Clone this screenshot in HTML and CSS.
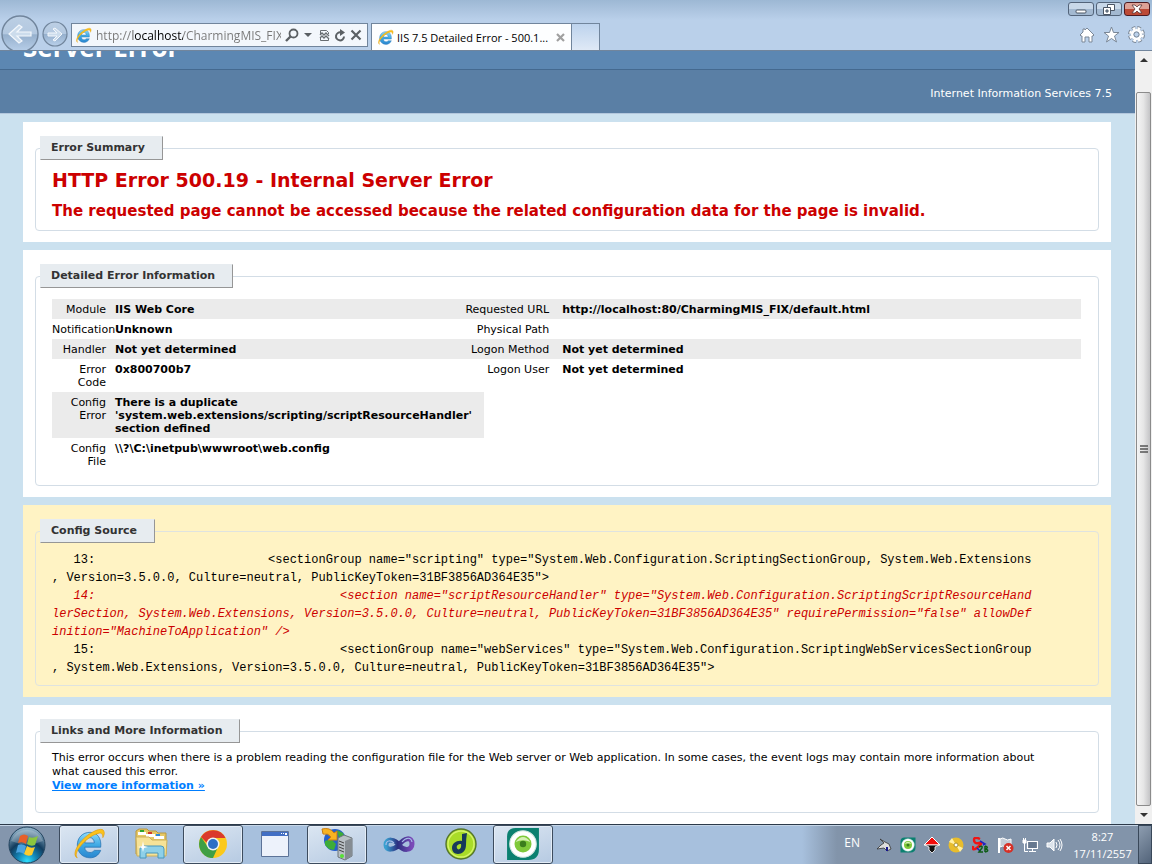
FILE: index.html
```html
<!DOCTYPE html>
<html lang="en">

<head>
    <meta charset="utf-8">
    <title>IIS 7.5 Detailed Error - 500.19 - Internal Server Error</title>
    <link rel="stylesheet" href="styles.css">
</head>

<body>
    <svg class="defs" aria-hidden="true">
        <defs>
            <linearGradient id="ieBlue" x1="0" y1="0" x2="0" y2="1">
                <stop offset="0" stop-color="#8fdcfa" />
                <stop offset="0.5" stop-color="#3fa9e4" />
                <stop offset="1" stop-color="#2a86cf" />
            </linearGradient>
            <linearGradient id="navFill" x1="0" y1="0" x2="0" y2="1">
                <stop offset="0" stop-color="#bccfe4" />
                <stop offset="0.5" stop-color="#b3c8e0" />
                <stop offset="0.52" stop-color="#96b0cd" />
                <stop offset="1" stop-color="#b9d0ea" />
            </linearGradient>
            <radialGradient id="orb" cx="0.5" cy="0.95" r="0.9">
                <stop offset="0" stop-color="#2fe0ff" />
                <stop offset="0.3" stop-color="#1484b5" />
                <stop offset="0.6" stop-color="#123c5e" />
                <stop offset="1" stop-color="#8fb0c6" />
            </radialGradient>
            <linearGradient id="vs" x1="0" y1="0" x2="1" y2="0">
                <stop offset="0" stop-color="#3aa0d0" />
                <stop offset="0.45" stop-color="#2b2f80" />
                <stop offset="1" stop-color="#7a4ab8" />
            </linearGradient>
            <symbol id="ie" viewBox="0 0 32 32">
                <path d="M27 19H12c0 3 2 5 5 5 2 0 3-1 4-2h6c-2 5-6 7-10 7-7 0-12-5-12-12S10 5 17 5s11 6 10 14zM12 15h9c0-3-2-5-4-5-3 0-5 2-5 5z" fill="url(#ieBlue)" stroke="#2470b0" stroke-width="0.7" fill-rule="evenodd" />
                <path d="M5 29C0 27 4 17 12 10 20 3 29 0 30 4c1 2 0 4-1 6 0-3-1-5-4-4C19 7 12 13 8 18c-4 5-5 9-3 11z" fill="#fbc21c" stroke="#dd9a12" stroke-width="0.6" />
            </symbol>
            <symbol id="eye" viewBox="0 0 32 32">
                <path d="M9 1h22v20q0 10-10 10H1V9q0-8 8-8z" fill="#0b8070" />
                <circle cx="16" cy="16" r="12.500" fill="#fff" stroke="#cfe4dd" />
                <circle cx="16" cy="16" r="8" fill="#7fc93a" />
                <circle cx="16" cy="16" r="3" fill="#3b7d1c" />
                <path d="M9 14q7-9 14 0-7-3-14 0z" fill="#d6f0b5" />
            </symbol>
        </defs>
    </svg>

    <header class="chrome">
        <nav class="nav">
            <button class="back" aria-label="Back">
                <svg width="38" height="38" viewBox="0 0 38 38">
                    <circle cx="19" cy="19" r="18" fill="url(#navFill)" stroke="#71859c" stroke-width="1.4" />
                    <path d="M8 19l10-9 3 2-5 5h14v4H16l5 5-3 2z" fill="#ccdcec" stroke="#f4f8fc" stroke-width="1.2" />
                </svg>
            </button>
            <button class="forward" aria-label="Forward">
                <svg width="26" height="26" viewBox="0 0 26 26">
                    <circle cx="13" cy="13" r="12" fill="url(#navFill)" stroke="#71859c" stroke-width="1.2" />
                    <path d="M20 13l-7-6-2 1 4 4H6v3h9l-4 4 2 1z" fill="#ccdcec" stroke="#f4f8fc" />
                </svg>
            </button>
        </nav>
        <div class="address">
            <svg width="17" height="17"><use href="#ie" /></svg>
            <input class="url" type="text" aria-label="Address" value="http://localhost/CharmingMIS_FIX/">
            <button aria-label="Search">
                <svg width="14" height="14" viewBox="0 0 14 14" fill="none" stroke="#5b6064">
                    <circle cx="8.500" cy="5.500" r="4" stroke-width="1.8" />
                    <path d="M5.500 8.500L1 13" stroke-width="2.400" />
                </svg>
            </button>
            <button class="caret" aria-label="Show address list">
                <svg width="8" height="5" viewBox="0 0 8 5"><path d="M0 0h8L4 4z" fill="#5b6064" /></svg>
            </button>
            <button aria-label="Compatibility view">
                <svg width="11" height="13" viewBox="0 0 11 13" fill="none" stroke="#686d71">
                    <path d="M1.500 5V1.500h6l2 2V5M1.500 9v2.500h8V9" />
                    <path d="M1 6l2-2 2 2 2-2 3 3M1 9l2-2 2 2 2-2 3 3" stroke-width="1.300" />
                </svg>
            </button>
            <button aria-label="Refresh">
                <svg width="12" height="13" viewBox="0 0 12 13">
                    <path d="M7 3.500a4 4 0 1 0 3 4" fill="none" stroke="#5b6064" stroke-width="2" />
                    <path d="M6 0l5 3.500L6 7z" fill="#5b6064" />
                </svg>
            </button>
            <button aria-label="Stop">
                <svg width="12" height="12" viewBox="0 0 12 12"><path d="M1.500 1.500l9 9M10.500 1.500l-9 9" stroke="#5b6064" stroke-width="2.200" /></svg>
            </button>
        </div>
        <div class="tab">
            <svg width="17" height="17"><use href="#ie" /></svg>
            <span class="tab-title">IIS 7.5 Detailed Error - 500.1...</span>
            <button aria-label="Close tab">
                <svg width="9" height="9" viewBox="0 0 9 9"><path d="M1 1l7 7M8 1L1 8" stroke="#a0a0a0" stroke-width="2.200" /></svg>
            </button>
        </div>
        <button class="new-tab" aria-label="New tab"></button>
        <div class="corner">
            <div class="window-buttons">
                <button aria-label="Minimize">
                    <svg width="12" height="11" viewBox="0 0 12 11"><rect x="1" y="6" width="10" height="3" rx="1" fill="#fff" stroke="#4b5665" /></svg>
                </button>
                <button aria-label="Restore">
                    <svg width="12" height="11" viewBox="0 0 12 11" fill="#fff" stroke="#4b5665">
                        <path d="M4.500 .5h7v6h-7z" />
                        <path d="M.5 3.500h7v7h-7z" />
                        <path d="M3 6h2v2H3z" fill="#9fb3c9" />
                    </svg>
                </button>
                <button class="close" aria-label="Close">
                    <svg width="12" height="10" viewBox="0 0 12 10"><path d="M1 1h3l2 2 2-2h3L8 5l3 4H8L6 7 4 9H1l3-4z" fill="#fff" stroke="#5a3636" stroke-width=".8" /></svg>
                </button>
            </div>
            <div class="tools">
                <button aria-label="Home">
                    <svg width="16" height="16" viewBox="0 0 16 16"><path d="M8 1l7 7-1 1h-1v6h-3v-5H6v5H3V9H2L1 8l3-3V2h2v1z" fill="#fff" stroke="#7a8797" /></svg>
                </button>
                <button aria-label="Favorites">
                    <svg width="17" height="17" viewBox="0 0 17 17"><path d="M8.500 1l2 5.500H16l-4.500 3.500 2 6-5-3.500-5 3.500 2-6L1 6.500h5.500z" fill="#fff" stroke="#7a8797" /></svg>
                </button>
                <button aria-label="Tools">
                    <svg width="17" height="17" viewBox="0 0 17 17">
                        <circle cx="8.500" cy="8.500" r="6.500" fill="none" stroke="#7a8797" stroke-width="4" stroke-dasharray="3.300 1.800" />
                        <circle cx="8.500" cy="8.500" r="6.200" fill="none" stroke="#fff" stroke-width="2.600" stroke-dasharray="2.700 2.170" stroke-dashoffset="-.3" />
                        <circle cx="8.500" cy="8.500" r="4.200" fill="none" stroke="#fff" stroke-width="2.600" />
                        <circle cx="8.500" cy="8.500" r="2.600" fill="#bcd2ec" stroke="#7a8797" />
                    </svg>
                </button>
            </div>
        </div>
    </header>

    <div class="viewport">
        <main class="page">
            <div class="page-title"><h1>Server Error</h1></div>
            <div class="server-version">Internet Information Services 7.5</div>
            <div class="content">
                <section class="panel">
                    <fieldset class="summary">
                        <legend>Error Summary</legend>
                        <h2>HTTP Error 500.19 - Internal Server Error</h2>
                        <h3>The requested page cannot be accessed because the related configuration data for the page is invalid.</h3>
                    </fieldset>
                </section>
                <section class="panel">
                    <fieldset class="details">
                        <legend>Detailed Error Information</legend>
                        <div class="tables">
                            <table class="left">
                                <tr class="alt"><th scope="row">Module</th><td>IIS Web Core</td></tr>
                                <tr><th scope="row">Notification</th><td>Unknown</td></tr>
                                <tr class="alt"><th scope="row">Handler</th><td>Not yet determined</td></tr>
                                <tr><th scope="row">Error Code</th><td>0x800700b7</td></tr>
                                <tr class="alt"><th scope="row">Config Error</th><td>There is a duplicate 'system.web.extensions/scripting/scriptResourceHandler' section defined</td></tr>
                                <tr><th scope="row">Config File</th><td>\\?\C:\inetpub\wwwroot\web.config</td></tr>
                            </table>
                            <table class="right">
                                <tr class="alt"><th scope="row">Requested URL</th><td>http://localhost:80/CharmingMIS_FIX/default.html</td></tr>
                                <tr><th scope="row">Physical Path</th><td></td></tr>
                                <tr class="alt"><th scope="row">Logon Method</th><td>Not yet determined</td></tr>
                                <tr><th scope="row">Logon User</th><td>Not yet determined</td></tr>
                            </table>
                        </div>
                    </fieldset>
                </section>
                <section class="panel source">
                    <fieldset>
                        <legend>Config Source</legend>
<pre>   13:                        &lt;sectionGroup name="scripting" type="System.Web.Configuration.ScriptingSectionGroup, System.Web.Extensions
, Version=3.5.0.0, Culture=neutral, PublicKeyToken=31BF3856AD364E35"&gt;
<em>   14:                                  &lt;section name="scriptResourceHandler" type="System.Web.Configuration.ScriptingScriptResourceHand
lerSection, System.Web.Extensions, Version=3.5.0.0, Culture=neutral, PublicKeyToken=31BF3856AD364E35" requirePermission="false" allowDef
inition="MachineToApplication" /&gt;</em>
   15:                                  &lt;sectionGroup name="webServices" type="System.Web.Configuration.ScriptingWebServicesSectionGroup
, System.Web.Extensions, Version=3.5.0.0, Culture=neutral, PublicKeyToken=31BF3856AD364E35"&gt;</pre>
                    </fieldset>
                </section>
                <section class="panel">
                    <fieldset class="more">
                        <legend>Links and More Information</legend>
                        <p>This error occurs when there is a problem reading the configuration file for the Web server or Web application. In some cases, the event logs may contain more information about what caused this error.</p>
                        <a href="#">View more information &raquo;</a>
                    </fieldset>
                </section>
            </div>
        </main>
        <div class="scrollbar">
            <button aria-label="Scroll up"><svg width="8" height="4" viewBox="0 0 8 4"><path d="M4 0l4 4H0z" fill="#333" /></svg></button>
            <div class="thumb"><svg width="8" height="9" viewBox="0 0 8 9"><path d="M0 1h8M0 4h8M0 7h8" stroke="#555" stroke-width="1.600" /></svg></div>
            <button aria-label="Scroll down"><svg width="8" height="4" viewBox="0 0 8 4"><path d="M0 0h8L4 4z" fill="#333" /></svg></button>
        </div>
    </div>

    <footer class="taskbar">
        <button class="start" aria-label="Start">
            <svg width="38" height="38" viewBox="0 0 38 38">
                <circle cx="19" cy="19" r="18" fill="url(#orb)" stroke="#23435d" />
                <path d="M3 15a17 17 0 0 1 32 0q-16 7-32 0z" fill="#fff" opacity=".22" />
                <path d="M12 10q4-3 8 0l-2 8q-4-3-8-1z" fill="#e8602a" />
                <path d="M21 11q4 2 9-1l-3 9q-4 2-8-1z" fill="#8cc63e" />
                <path d="M10 19q4-2 8 1l-2 8q-4-3-8-1z" fill="#4aa3e0" />
                <path d="M19 20q4 3 8 1l-3 8q-4 2-8-1z" fill="#fbcb2e" />
            </svg>
        </button>
        <div class="apps">
            <button class="app open" aria-label="Internet Explorer">
                <svg width="34" height="34"><use href="#ie" /></svg>
            </button>
            <button class="app" aria-label="Windows Explorer">
                <svg width="34" height="32" viewBox="0 0 34 32">
                    <path d="M2 3l3-2h8l2 2h7l2 2h8v21H2z" fill="#e6c866" stroke="#b9983e" />
                    <path d="M4 4h8v3H4zM12 6h9v3h-9zM20 8h10v3H20z" fill="#fff" />
                    <path d="M6 2h4v2H6z" fill="#2da52d" /><path d="M14 4h4v2h-4z" fill="#cf3a2b" /><path d="M22 6h4v2h-4z" fill="#2a87d8" />
                    <path d="M2 9h13l3 3h15l-1 16H3z" fill="#f6e297" stroke="#cdb05a" />
                    <path d="M6 30V21q0-3 3-3h18q3 0 3 3v9h-6v-5H12v5z" fill="#8ed0e8" stroke="#4796bc" />
                    <path d="M9 13l1 5 4 1-4 1-1 4-1-4-4-1 4-1z" fill="#fff" />
                </svg>
            </button>
            <button class="app open" aria-label="Google Chrome">
                <svg width="30" height="30" viewBox="0 0 30 30">
                    <circle cx="15" cy="15" r="14" fill="#fbc91b" />
                    <path d="M15 15l-2 14A14 14 0 0 1 3 8l7 10 5 3 5-3-5 11h-2z" fill="#3f9f45" />
                    <path d="M3 8a14 14 0 0 1 24.500 1H15a6 6 0 0 0-6 5z" fill="#da3a2c" />
                    <circle cx="15" cy="15" r="6.500" fill="#eef3f5" />
                    <circle cx="15" cy="15" r="5" fill="#2d6fc4" />
                </svg>
            </button>
            <button class="app" aria-label="Window">
                <svg width="28" height="26" viewBox="0 0 28 26">
                    <path d="M.5 .5h27v25H.5z" fill="#edf2fb" stroke="#5c7398" />
                    <path d="M1 1h26v4H1z" fill="#426fc4" />
                    <path d="M20 2h1v1h-1zM22 2h1v1h-1zM24 2h2v2h-2z" fill="#fff" />
                </svg>
            </button>
            <button class="app open" aria-label="IIS Manager">
                <svg width="32" height="34" viewBox="0 0 32 34">
                    <circle cx="14" cy="13" r="11" fill="#2760cb" />
                    <path d="M4 14l6-2 5 5-2 6-5-1-4-4zM16 3l6 3 2 6-6-1z" fill="#3dac38" />
                    <path d="M1 2q8-2 12 4l3-2v9H7l3-3Q7 6 2 7z" fill="#f9b321" stroke="#c97e13" />
                    <path d="M17 11l6-3 8 3v18l-7 4-7-3z" fill="#b9c0c5" stroke="#6d7479" />
                    <path d="M24 14l7-3v18l-7 4z" fill="#858c92" />
                    <path d="M18 14l5 2M18 17l5 2M18 20l5 2M18 23l5 2" stroke="#444" />
                    <circle cx="21" cy="29" r="2" fill="#56e034" />
                </svg>
            </button>
            <button class="app" aria-label="Visual Studio">
                <svg width="32" height="20" viewBox="0 0 32 20">
                    <path d="M16 11C12 5 3 4 3 11c0 6 8 5 13 0 5-7 13-9 13-1 0 7-9 7-13 1z" fill="none" stroke="url(#vs)" stroke-width="5" />
                    <path d="M3 11c0-5 5-5 8-2M19 8c4-5 9-5 10 0" fill="none" stroke="#a7bde9" stroke-width="1.200" />
                </svg>
            </button>
            <button class="app" aria-label="Dreamweaver">
                <svg width="32" height="32" viewBox="0 0 32 32">
                    <circle cx="16" cy="16" r="15" fill="#a9dc28" stroke="#55752b" stroke-width="1.400" />
                    <circle cx="16" cy="16" r="13" fill="none" stroke="#d5f36c" stroke-width="1.400" />
                    <path d="M17 6l5-1q-1 6-1 12c0 6-4 9-8 9s-6-3-6-6c0-5 5-8 10-7zM16 16c-3 0-5 2-4 4 1 3 5 1 4-4z" fill="#17395a" fill-rule="evenodd" />
                </svg>
            </button>
            <button class="app open" aria-label="Monitor">
                <svg width="34" height="34"><use href="#eye" /></svg>
            </button>
        </div>
        <div class="tray">
            <span class="lang">EN</span>
            <svg width="16" height="16" viewBox="0 0 16 16"><path d="M4 2l5 3 4 2 2 5-4 2-3-3-7 1 4-4 3-2z" fill="#ddd" stroke="#333" stroke-width=".8" /><path d="M10 10h2v4h-2z" fill="#15158c" /></svg>
            <svg width="16" height="16"><use href="#eye" /></svg>
            <svg width="16" height="16" viewBox="0 0 16 16"><path d="M8 0l8 8H0z" fill="#f00c0c" stroke="#fff" /><path d="M1 8h14l-4 2v3l-3 3-3-3v-3z" fill="#111" stroke="#fff" stroke-width=".8" /></svg>
            <svg width="16" height="16" viewBox="0 0 16 16"><circle cx="8" cy="8" r="7.500" fill="#e8bd2c" /><path d="M8 8L1 5l3-4zM8 8l7 3-3 4z" fill="#fff0a4" /><circle cx="8" cy="8" r="2" fill="#fff" stroke="#a8922f" /></svg>
            <svg width="17" height="16" viewBox="0 0 17 16" fill="none"><path d="M8 2Q2-1 2 3t5 3-1 4-5-1" stroke="#f01414" stroke-width="2.500" /><path d="M8 4l5 3-2 1M5 11l3 3" stroke="#2020c0" stroke-width="1.500" /><path d="M7 10q4-2 3 1l-3 4h4M13 9v6M13 9q4 1 1 3 4 2-1 3" stroke="#0e5c14" stroke-width="1.500" /></svg>
            <svg width="17" height="16" viewBox="0 0 17 16"><path d="M2 1v15" stroke="#fff" stroke-width="2" /><path d="M3 2q3-2 5 0t6 0v8q-4 2-6 0t-5 0z" fill="#c4ccd6" stroke="#fff" /><circle cx="11.500" cy="11" r="5" fill="#d52f26" /><path d="M9.500 9l4 4M13.500 9l-4 4" stroke="#fff" stroke-width="1.500" /></svg>
            <svg width="16" height="16" viewBox="0 0 16 16" fill="none" stroke="#fff"><path d="M5.500 4.500h10v7h-10z" fill="#66788f" stroke-width="1.200" /><path d="M7 14.500h7M10.500 12v2M2.500 6v8.500H6M1.500 1v2M3.500 1v2" /><path d="M1 3h3v3H1z" fill="#fff" /></svg>
            <svg width="17" height="16" viewBox="0 0 17 16" fill="none" stroke="#fff"><path d="M1 6h3l4-4v12l-4-4H1z" fill="#dbe2ea" /><path d="M10 5q2 3 0 6M12 3q4 5 0 10M14 2q4 6 0 12" /></svg>
        </div>
        <div class="clock"><span>8:27</span><span>17/11/2557</span></div>
        <button class="show-desktop" aria-label="Show desktop"></button>
    </footer>
</body>

</html>
```
FILE: styles.css
```css
* {
    box-sizing: border-box;
}

body {
    margin: 0;
    height: 100vh;
    display: flex;
    flex-direction: column;
    overflow: hidden;
    font-family: Verdana, "DejaVu Sans", sans-serif;
    font-size: 11px;
    color: #000;
}

button {
    display: flex;
    align-items: center;
    justify-content: center;
    flex: none;
    margin: 0;
    padding: 0;
    border: 0;
    background: none;
}

svg {
    display: block;
    flex: none;
}

.defs {
    position: absolute;
    width: 0;
    height: 0;
}

/* browser bar */
.chrome {
    display: flex;
    align-items: flex-end;
    flex: none;
    height: 51px;
    border-bottom: 1px solid #71859c;
    background: linear-gradient(#9db8d4, #bad0ea 20px);
    font-family: "Segoe UI", "Open Sans", sans-serif;
    font-size: 11px;
    overflow: hidden;
}

.nav {
    display: flex;
    align-items: center;
    gap: 3px;
    height: 32px;
    padding-left: 1px;
    width: 71px;
}

.address {
    display: flex;
    align-items: center;
    gap: 4px;
    width: 297px;
    height: 24px;
    margin-bottom: 3px;
    padding: 0 5px 0 3px;
    border: 1px solid #71859c;
    background: #f3f7fc;
    font-size: 12px;
}

.url {
    flex: 1;
    min-width: 0;
    padding: 0;
    border: 0;
    outline: 0;
    font: inherit;
    color: transparent;
    background: linear-gradient(to right, #777 37px, #000 37px, #000 87px, #777 87px);
    -webkit-background-clip: text;
    background-clip: text;
}

.caret {
    margin: 0 3px 0 1px;
}

.tab {
    display: flex;
    align-items: center;
    gap: 3px;
    width: 201px;
    height: 27px;
    margin-left: 3px;
    padding: 0 6px 0 5px;
    border: 1px solid #71859c;
    border-bottom: 0;
    background: #fdfeff;
}

.tab-title {
    flex: 1;
    overflow: hidden;
    white-space: nowrap;
}

.new-tab {
    width: 28px;
    height: 27px;
    border: 1px solid #71859c;
    border-width: 1px 1px 0 0;
    background: linear-gradient(#bdd3ed, #dfe9f6);
}

.corner {
    display: flex;
    flex-direction: column;
    justify-content: space-between;
    align-items: flex-end;
    height: 50px;
    margin-left: auto;
    padding: 2px 2px 7px;
}

.window-buttons {
    display: flex;
    gap: 2px;
}

.window-buttons button {
    width: 26px;
    height: 14px;
    border: 1px solid #53647a;
    border-radius: 3px;
    background: linear-gradient(#c8d8e9 50%, #a3b9d1 50%);
}

.window-buttons .close {
    border-color: #4d1a20;
    background: linear-gradient(#dda196 50%, #bc4a36 50%);
}

.tools {
    display: flex;
    align-items: center;
    gap: 8px;
    padding-right: 5px;
}

/* page */
.viewport {
    display: flex;
    flex: 1;
    min-height: 0;
}

.page {
    flex: 1;
    min-width: 0;
    overflow: hidden;
    background: #cbe1ef;
}

/* scrolled down, so only the foot of the title shows */
.page-title {
    display: flex;
    align-items: flex-end;
    height: 19px;
    padding: 0 23px 6px;
    border-bottom: 1px solid #44698f;
    background: #5c87b2;
    overflow: hidden;
    color: #fff;
}

.page-title h1 {
    margin: 0;
    font: bold 26px/32px "Trebuchet MS", "Open Sans", sans-serif;
}

.server-version {
    height: 44px;
    padding-right: 23px;
    border-bottom: 1px solid #b3c7dd;
    background: #5a7fa5;
    line-height: 48px;
    text-align: right;
    color: #fff;
}

.content {
    display: flex;
    flex-direction: column;
    gap: 8px;
    padding: 8px 24px 0 23px;
}

.panel {
    padding: 14px 12px 11px;
    background: #fff;
}

.source {
    background: #fff3c4;
}

fieldset {
    min-width: 0;
    margin: 0;
    padding: 8px 17px 10px 16px;
    border: 1px solid #d3dde6;
    border-radius: 4px;
}

legend {
    margin-left: -12px;
    padding: 0 17px 0 10px;
    border: 1px solid #e7ecf0;
    border-right-color: #969696;
    border-bottom-color: #969696;
    background: #e7ecf0;
    line-height: 22px;
    font-weight: bold;
    color: #333;
}

.summary {
    padding-top: 7px;
    padding-bottom: 7px;
}

h2,
h3 {
    margin: 0;
    color: #c00;
}

h2 {
    font-size: 19px;
    line-height: 26px;
}

h3 {
    margin-top: 6px;
    font-size: 15px;
    line-height: 24px;
}

.details {
    padding-top: 11px;
    padding-bottom: 14px;
}

.tables {
    display: flex;
    align-items: flex-start;
}

table {
    border-collapse: collapse;
    table-layout: fixed;
    line-height: 13px;
}

.left {
    flex: 0 0 42%;
    width: 42%;
}

/* the labels of the second table reach back over the empty end of the first */
.right {
    flex: 1;
    margin-left: -24px;
}

th,
td {
    padding: 4px 0 3px;
    text-align: left;
    vertical-align: top;
}

th {
    width: 63px;
    padding-right: 9px;
    font-weight: normal;
    text-align: right;
}

.right th {
    width: 102px;
    padding-right: 13px;
}

td {
    font-weight: bold;
}

.alt {
    background: #ebebeb;
}

pre {
    margin: 0;
    font-family: "Courier New", "Liberation Mono", monospace;
    font-size: 12px;
    line-height: 18px;
}

.source fieldset {
    border-color: #dfe3e0;
    padding-bottom: 8px;
}

em {
    color: #c00;
}

.more {
    height: 94px;
    padding-right: 40px;
    line-height: 14px;
}

.more p {
    margin: 0;
}

.more a {
    font-weight: bold;
    color: #007eff;
}

/* scrollbar */
.scrollbar {
    display: flex;
    flex-direction: column;
    width: 17px;
    background: #f0f0f0;
}

.scrollbar button {
    height: 18px;
}

.thumb {
    display: flex;
    align-items: center;
    justify-content: center;
    flex: 1;
    margin: 23px 1px 0;
    border: 1px solid #8b8b8b;
    border-radius: 2px;
    background: linear-gradient(to right, #f4f4f4, #e6e6e6 50%, #c4c4c6);
}

/* taskbar */
.taskbar {
    display: flex;
    flex: none;
    height: 40px;
    border-top: 1px solid #2c3a4a;
    background: linear-gradient(to right, #8496ad 59px, #a7c0dd 60px, #a7c0dd calc(100% - 350px), #8294aa calc(100% - 315px));
    box-shadow: inset 0 1px #c5d5e6;
    font-family: "Segoe UI", "Open Sans", sans-serif;
    font-size: 11px;
    color: #fff;
}

.start {
    width: 59px;
    padding-right: 5px;
}

.apps {
    display: flex;
    gap: 2px;
}

.app {
    width: 60px;
    height: 39px;
    padding-bottom: 2px;
    border: 1px solid transparent;
    border-radius: 3px;
}

.open {
    border-color: #3d4c5e;
    background: linear-gradient(160deg, #dbe6f2, #b6cae2);
    box-shadow: inset 0 0 0 1px #e3ecf6;
}

.tray {
    display: flex;
    align-items: center;
    gap: 8px;
    margin-left: auto;
}

.lang {
    margin-right: 8px;
    padding-bottom: 4px;
    font-size: 12px;
}

.clock {
    display: flex;
    flex-direction: column;
    align-items: center;
    justify-content: center;
    width: 75px;
    padding-left: 4px;
    line-height: 17px;
}

.show-desktop {
    width: 14px;
    border: 1px solid #39485a;
    background: linear-gradient(135deg, #8d9db0, #53647a);
}
```
